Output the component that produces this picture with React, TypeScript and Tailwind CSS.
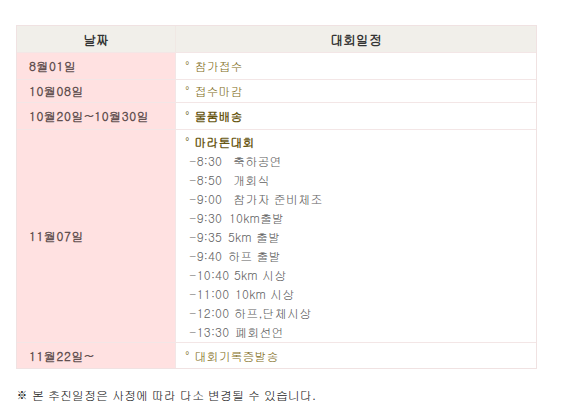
const schedule: { time: string; event: string; w: number }[] = [
  { time: "-8:30", event: "축하공연", w: 44 },
  { time: "-8:50", event: "개회식", w: 44 },
  { time: "-9:00", event: "참가자 준비체조", w: 44 },
  { time: "-9:30", event: "10km출발", w: 40 },
  { time: "-9:35", event: "5km 출발", w: 39 },
  { time: "-9:40", event: "하프 출발", w: 39 },
  { time: "-10:40", event: "5km 시상", w: 45 },
  { time: "-11:00", event: "10km 시상", w: 46 },
  { time: "-12:00", event: "하프,단체시상", w: 45 },
  { time: "-13:30", event: "폐회선언", w: 46 },
];

const font = "font-['Gulim','Noto_Sans_CJK_KR',sans-serif]";

function Row({
  date,
  h,
  children,
}: {
  date: string;
  h: string;
  children: React.ReactNode;
}) {
  return (
    <div className={`flex border-t border-[#f3e6e6] ${h}`}>
      <div className="w-[159px] shrink-0 bg-[#ffe1e1] border-r border-[#f3e6e6] flex items-center pl-[12px] text-[12px] font-bold text-[#625050] tracking-[0.6px]">
        {date}
      </div>
      <div className="flex-1 bg-white flex items-center pl-[9px]">{children}</div>
    </div>
  );
}

function Item({ label, bold }: { label: string; bold?: boolean }) {
  return (
    <span className={`text-[12px] ${bold ? "font-bold text-[#665510]" : "text-[#7f6d22]"}`}>
      <span className="font-normal mr-[5px]">°</span>
      {label}
    </span>
  );
}

export default function App() {
  return (
    <div className={`w-[563px] h-[419px] bg-white ${font} leading-none`}>
      <div className="pt-[25px] pl-[16px]">
        <div className="w-[521px] border border-[#f0e2e2]">
          <div className="flex h-[26px] bg-[#f1efea] text-[13px] font-bold text-[#333]">
            <div className="w-[159px] shrink-0 border-r border-[#f0e8e4] flex items-center justify-center">
              날짜
            </div>
            <div className="flex-1 flex items-center justify-center">대회일정</div>
          </div>
          <Row date="8월01일" h="h-[27px]">
            <Item label="참가접수" />
          </Row>
          <Row date="10월08일" h="h-[23px]">
            <Item label="접수마감" />
          </Row>
          <Row date="10월20일~10월30일" h="h-[27px]">
            <Item label="물품배송" bold />
          </Row>
          <div className="flex border-t border-[#f3e6e6] h-[213px]">
            <div className="w-[159px] shrink-0 bg-[#ffe1e1] border-r border-[#f3e6e6] flex items-center pl-[12px] text-[12px] font-bold text-[#625050] tracking-[0.6px]">
              11월07일
            </div>
            <div className="flex-1 bg-white pl-[9px] pt-[2px] flex flex-col">
              <div className="h-[19px] flex items-center">
                <Item label="마라톤대회" bold />
              </div>
              {schedule.map((s) => (
                <div key={s.time} className="h-[19px] flex items-center pl-[4px] text-[12px] text-[#606060] tracking-[0.2px]">
                  <span className="inline-block" style={{ width: s.w }}>
                    {s.time}
                  </span>
                  <span>{s.event}</span>
                </div>
              ))}
            </div>
          </div>
          <Row date="11월22일~" h="h-[26px]">
            <Item label="대회기록증발송" />
          </Row>
        </div>
        <p className="mt-[20px] text-[12px] text-[#222]">
          ※ 본 추진일정은 사정에 따라 다소 변경될 수 있습니다.
        </p>
      </div>
    </div>
  );
}
